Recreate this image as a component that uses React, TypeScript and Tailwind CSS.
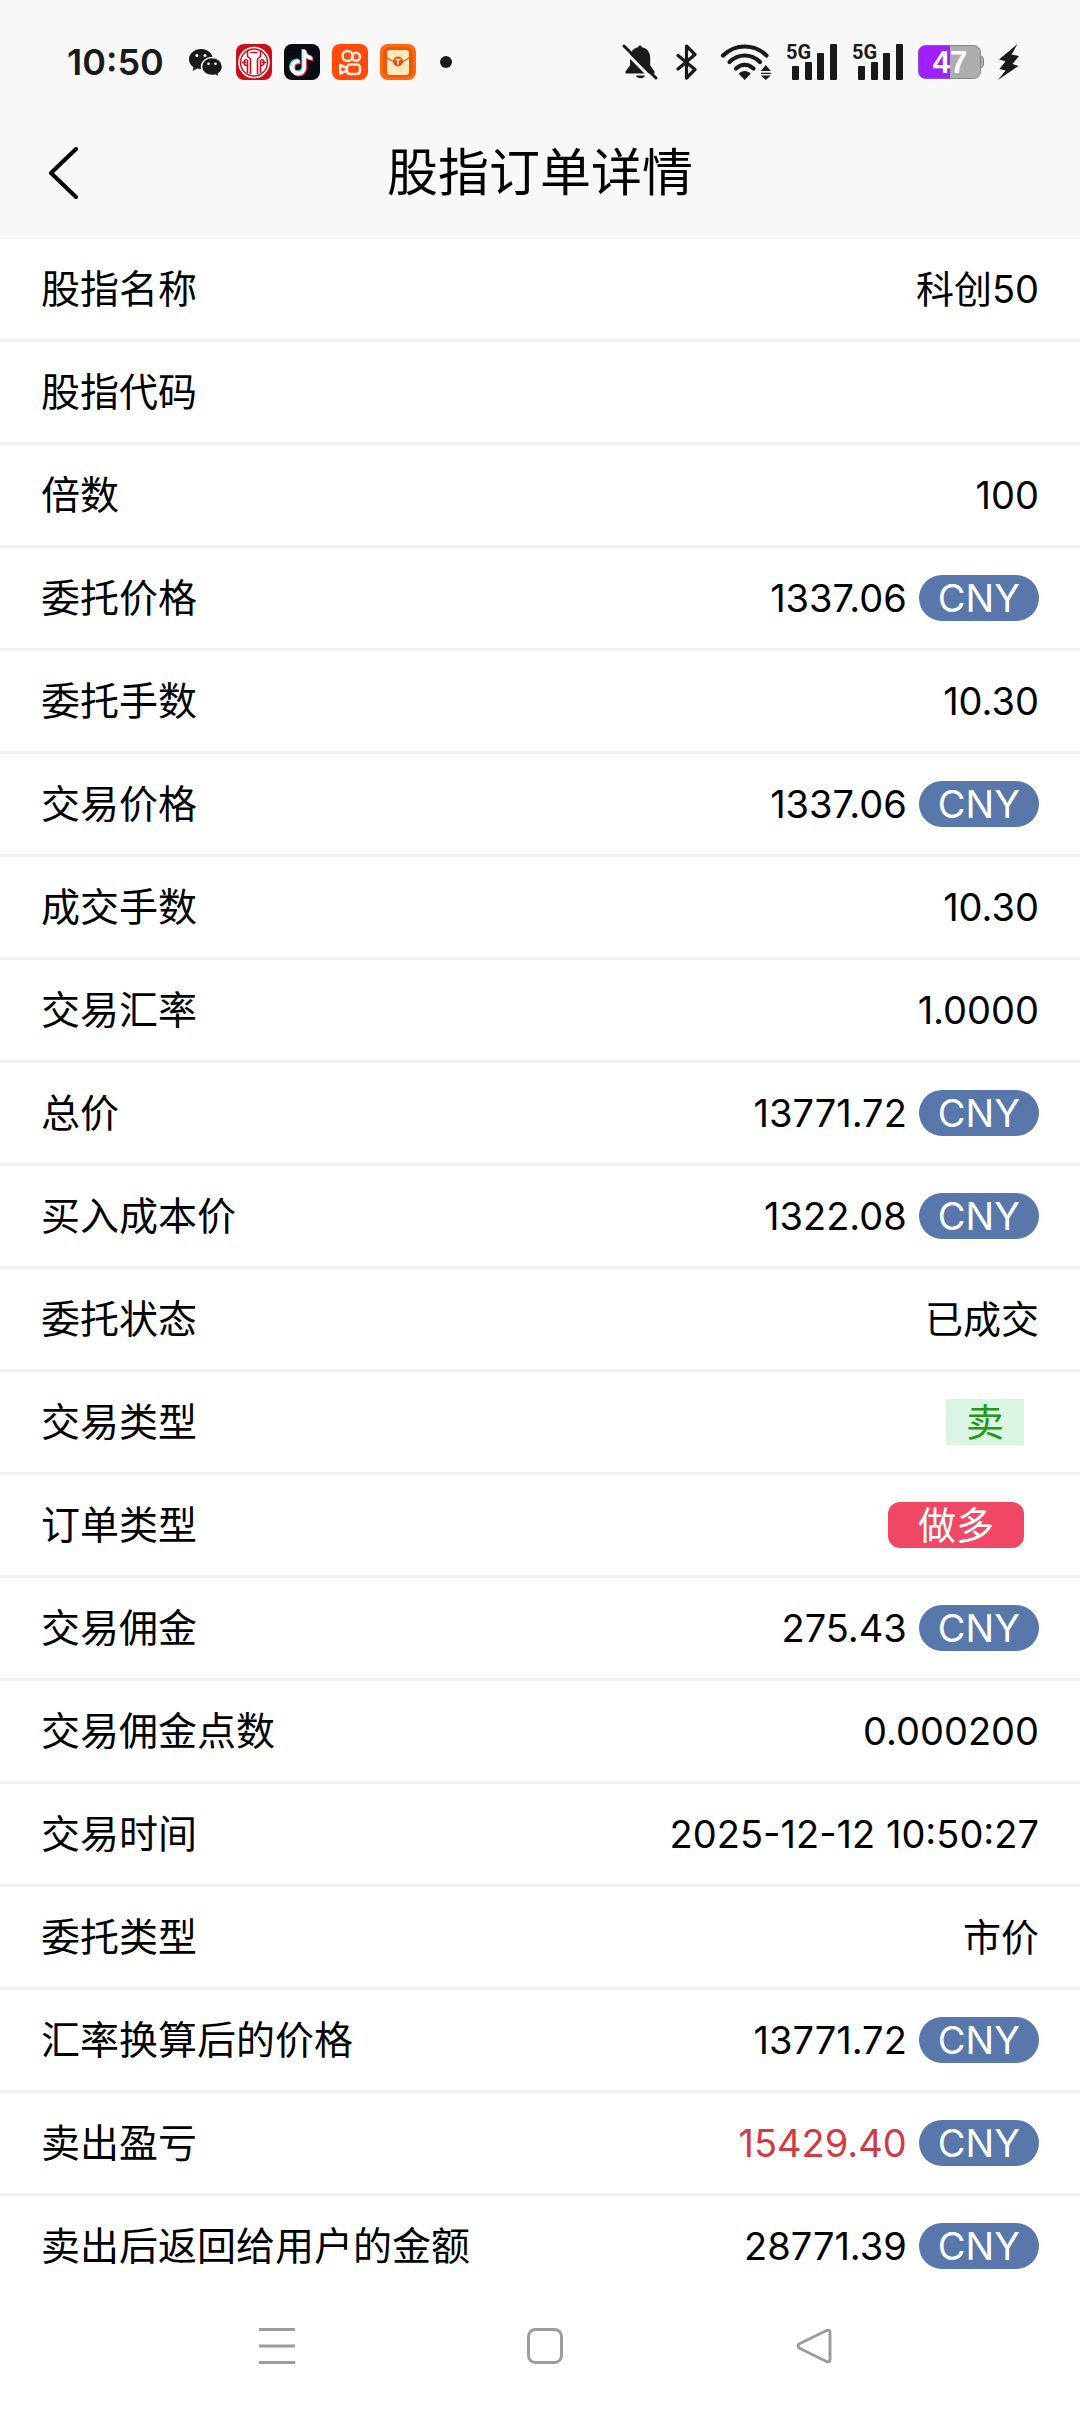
import type { ReactNode } from 'react'

type Tag = 'currency' | 'sell' | 'long'

interface OrderField {
  label: string
  value?: string
  tag?: Tag
  danger?: boolean
}

const FIELDS: OrderField[] = [
  { label: '股指名称', value: '科创50' },
  { label: '股指代码' },
  { label: '倍数', value: '100' },
  { label: '委托价格', value: '1337.06', tag: 'currency' },
  { label: '委托手数', value: '10.30' },
  { label: '交易价格', value: '1337.06', tag: 'currency' },
  { label: '成交手数', value: '10.30' },
  { label: '交易汇率', value: '1.0000' },
  { label: '总价', value: '13771.72', tag: 'currency' },
  { label: '买入成本价', value: '1322.08', tag: 'currency' },
  { label: '委托状态', value: '已成交' },
  { label: '交易类型', tag: 'sell' },
  { label: '订单类型', tag: 'long' },
  { label: '交易佣金', value: '275.43', tag: 'currency' },
  { label: '交易佣金点数', value: '0.000200' },
  { label: '交易时间', value: '2025-12-12 10:50:27' },
  { label: '委托类型', value: '市价' },
  { label: '汇率换算后的价格', value: '13771.72', tag: 'currency' },
  { label: '卖出盈亏', value: '15429.40', tag: 'currency', danger: true },
  { label: '卖出后返回给用户的金额', value: '28771.39', tag: 'currency' },
]

function ValueTag({ tag }: { tag: Tag }) {
  if (tag === 'sell') {
    return <span className="bg-[#daf5e3] text-[#249714] leading-[46px] px-5 mr-[15px]">卖</span>
  }
  if (tag === 'long') {
    return <span className="bg-[#f04864] text-white leading-[46px] rounded-xl px-[30px] mr-[15px]">做多</span>
  }
  return <span className="bg-[#5877aa] text-white leading-[46px] rounded-full px-[19px]">CNY</span>
}

function FieldRow({ field }: { field: OrderField }) {
  return (
    <div className="flex items-center justify-between h-[103px] px-[41px] border-b-[3px] border-[#f1f1f1] last:border-transparent">
      <dt className="text-[39px]">{field.label}</dt>
      <dd className="flex items-center gap-3 text-[38px]">
        {field.value && <span className={field.danger ? 'text-[#d13a45]' : ''}>{field.value}</span>}
        {field.tag && <ValueTag tag={field.tag} />}
      </dd>
    </div>
  )
}

/* Status bar icons */

function WeChatIcon() {
  return (
    <svg width="36" height="36" viewBox="0 0 36 36" fill="#1a1a1a">
      <path d="M13 5C6.400 5 1 9.500 1 15.200c0 3.300 1.700 6.100 4.500 8L4.600 27l4.600-2.400c1.200.300 2.500.500 3.800.500C19.600 25.100 25 20.700 25 15.200S19.600 5 13 5z" />
      <path d="M24 13.600c-5.800 0-10.500 4-10.500 9s4.700 9 10.500 9c1.200 0 2.300-.200 3.300-.500l4.200 2.300-1-3.600c2.500-1.700 4-4.300 4-7.200 0-5-4.700-9-10.500-9z" stroke="#f8f8f8" strokeWidth="1.500" />
      <g fill="#f8f8f8">
        <circle cx="8.800" cy="11.500" r="1.500" />
        <circle cx="17" cy="11.500" r="1.500" />
        <circle cx="20.500" cy="19.800" r="1.300" />
        <circle cx="27.500" cy="19.800" r="1.300" />
      </g>
    </svg>
  )
}

function BankIcon() {
  return (
    <svg width="36" height="36" viewBox="0 0 36 36">
      <rect width="36" height="36" rx="8" fill="#c8101c" />
      <circle cx="18" cy="18.500" r="15" fill="none" stroke="#fff" strokeWidth="1.500" />
      <circle cx="18" cy="18.500" r="12.800" fill="#fff" />
      <g fill="none" stroke="#c8101c" strokeWidth="1.600">
        <path d="M11.500 7v5.500l3 2.500v15M24.500 7v5.500l-3 2.500v15M14.500 8.500h7" />
        <path d="M11.500 16v13M24.500 16v13" />
        <path d="M5.500 18.500h5M25.500 18.500h5" strokeWidth="1" />
        <path d="M11 15.500a3 3 0 0 0 0 6M25 15.500a3 3 0 0 1 0 6" />
      </g>
    </svg>
  )
}

function TikTokIcon() {
  const note = 'M20 6h-3.600v17.200a4 4 0 1 1-4-4c.4 0 .8.1 1.200.2v-3.700a8 8 0 1 0 6.400 7.500V14c1.800 1.300 4 2 6.300 2v-3.600C23 12.300 20.200 9.500 20 6z'
  return (
    <svg width="36" height="36" viewBox="0 0 36 36">
      <rect width="36" height="36" rx="8" fill="#0b0b14" />
      <path d={note} fill="#25e0dc" transform="translate(1 -1)" />
      <path d={note} fill="#fb2c55" transform="translate(3 1)" />
      <path d={note} fill="#fff" transform="translate(2 0)" />
    </svg>
  )
}

function KuaishouIcon() {
  return (
    <svg width="36" height="36" viewBox="0 0 36 36">
      <rect width="36" height="36" rx="8" fill="#ff4a0c" />
      <g fill="none" stroke="#fff0e4" strokeWidth="2.500" strokeLinejoin="round">
        <circle cx="15.500" cy="12" r="5" />
        <circle cx="24" cy="12.800" r="4" />
        <rect x="15" y="20.500" width="13" height="9.500" rx="3" />
        <path d="M8.200 21v8.500l6.500-2.800v-2.900z" />
      </g>
    </svg>
  )
}

function EnvelopeIcon() {
  return (
    <svg width="36" height="36" viewBox="0 0 36 36">
      <rect width="36" height="36" rx="8" fill="#fb6a10" />
      <rect x="3" y="3" width="30" height="30" rx="7" fill="#f45408" />
      <rect x="7" y="6" width="22" height="25" rx="3" fill="#ffe9b8" />
      <path d="M7 13.500c3 3 7 4.500 11 4.500s8-1.500 11-4.500" fill="none" stroke="#d5671f" strokeWidth="1.200" />
      <circle cx="18" cy="17.500" r="5" fill="#d5561a" />
      <path d="M15.500 15.500h5M18 15.500v5" stroke="#ffe9b8" strokeWidth="1.500" />
    </svg>
  )
}

function MutedBellIcon() {
  return (
    <svg width="36" height="36" viewBox="0 0 36 36">
      <path d="M18 1.500c1 0 1.800.700 1.900 1.700 5 1 8.300 5 8.300 10v8l4.300 6.300v2H3.500v-2L8 21.200v-8c0-5 3.200-9 8.100-10 .1-1 .9-1.700 1.900-1.700zM14 31.500h9a4.600 3.500 0 0 1-9 0z" fill="#1a1a1a" />
      <path d="M0 4.500L32 37" stroke="#f8f8f8" strokeWidth="3" />
      <path d="M2 2L34 34" stroke="#1a1a1a" strokeWidth="3" strokeLinecap="round" />
    </svg>
  )
}

function BluetoothIcon() {
  return (
    <svg width="22" height="36" viewBox="0 0 22 36" fill="none" stroke="#1a1a1a" strokeWidth="3.200" strokeLinejoin="round" strokeLinecap="round">
      <path d="M2 11.500L19 25.500L10.500 34V2L19 10.500L2 25" />
    </svg>
  )
}

function WifiIcon() {
  return (
    <svg width="52" height="36" viewBox="0 0 52 36">
      <g fill="none" stroke="#1a1a1a" strokeWidth="4.200" strokeLinecap="round">
        <path d="M3 11.500c12.500-12 31-12 43.500 0" />
        <path d="M9.500 18c9-8.700 21.500-8.700 30.500 0" />
        <path d="M16 24.500c5.500-5 12-5 17.500 0" />
      </g>
      <path d="M24.700 36l-6-6.300c3-3.500 9-3.500 12 0zM45.800 21l5 6h-10zM45.800 36l5-4.500h-10zM41 28.800h9.800v1.200h-9.800z" fill="#1a1a1a" />
    </svg>
  )
}

function SignalIcon() {
  return (
    <svg width="52" height="36" viewBox="0 1 52 36" fill="#1a1a1a" className="overflow-visible">
      <text x="0" y="16" fontSize="20" fontWeight="700" className="font-[Roboto,sans-serif]">5G</text>
      <rect x="6" y="23" width="7" height="14" rx="1" />
      <rect x="19" y="19" width="7" height="18" rx="1" />
      <rect x="31" y="10" width="7" height="27" rx="1" />
      <rect x="44" y="1" width="7" height="36" rx="1" />
    </svg>
  )
}

function BatteryIcon() {
  return (
    <svg width="66" height="34" viewBox="0 0 66 34">
      <path d="M62 11h1.500l2 2.500v7l-2 2.500H62z" fill="#adadad" stroke="#858585" />
      <rect x="0.500" y="0.500" width="62" height="33" rx="7" fill="#adadad" stroke="#858585" />
      <path d="M32 .5H7.500a7 7 0 0 0-7 7v19a7 7 0 0 0 7 7H32z" fill="#a020ff" />
      <text x="32" y="28" textAnchor="middle" fontSize="31" fontWeight="700" fill="#fff" className="font-['Liberation_Sans',sans-serif]">47</text>
    </svg>
  )
}

function BoltIcon() {
  return (
    <svg width="22" height="36" viewBox="0 0 22 36" fill="#1a1a1a">
      <path d="M19.500 0L1 15.500l6.500 1.700L1.500 25l6 1.500L0 36l20.500-14-6-2L21 12l-7.500-1.500z" />
    </svg>
  )
}

function StatusBar() {
  return (
    <div className="flex items-center justify-between h-[124px] pl-[67px] pr-[60px]">
      <div className="flex items-center gap-3">
        <span className="text-[36px] font-semibold text-[#1a1a1a] mr-3">10:50</span>
        <WeChatIcon />
        <BankIcon />
        <TikTokIcon />
        <KuaishouIcon />
        <EnvelopeIcon />
        <span className="size-3 rounded-full bg-[#1a1a1a] ml-3" />
      </div>
      <div className="flex items-center gap-[14px]">
        <span className="mr-1"><MutedBellIcon /></span>
        <span className="mr-2"><BluetoothIcon /></span>
        <WifiIcon />
        <SignalIcon />
        <SignalIcon />
        <BatteryIcon />
        <BoltIcon />
      </div>
    </div>
  )
}

function NavButton({ label, children }: { label: string; children: ReactNode }) {
  return (
    <button type="button" aria-label={label}>
      <svg width="36" height="36" viewBox="0 0 36 36" fill="none" stroke="#9c9c9c" strokeWidth="3" strokeLinejoin="round">
        {children}
      </svg>
    </button>
  )
}

export default function App() {
  return (
    <div className="min-h-screen flex flex-col bg-white text-black font-[Inter,'Noto_Sans_CJK_SC',sans-serif]">
      <header className="bg-[#f8f8f8] pb-[19px]">
        <StatusBar />
        <div className="grid grid-cols-[1fr_auto_1fr] items-center h-24 px-[42px]">
          <button type="button" aria-label="返回" className="justify-self-start">
            <svg width="42" height="54" viewBox="0 0 42 54" fill="none" stroke="#000" strokeWidth="4" strokeLinecap="round" strokeLinejoin="round">
              <path d="M34 4L9 28L34 52" />
            </svg>
          </button>
          <h1 className="text-[51px] leading-none">股指订单详情</h1>
        </div>
      </header>

      <dl>
        {FIELDS.map((field) => (
          <FieldRow key={field.label} field={field} />
        ))}
      </dl>

      {/* System navigation */}
      <nav className="flex flex-1 items-center justify-between pl-[24%] pr-[23%] pb-5">
        <NavButton label="最近任务">
          <path d="M0 1.500h36M0 18h36M0 34.500h36" />
        </NavButton>
        <NavButton label="主屏幕">
          <rect x="1.500" y="1.500" width="33" height="33" rx="7" />
        </NavButton>
        <NavButton label="后退">
          <path d="M30.500 2.500L3 16q-2 2 0 4L30.500 33.500q3.500 1 3.500-2V4.500q0-3-3.500-2z" />
        </NavButton>
      </nav>
    </div>
  )
}
